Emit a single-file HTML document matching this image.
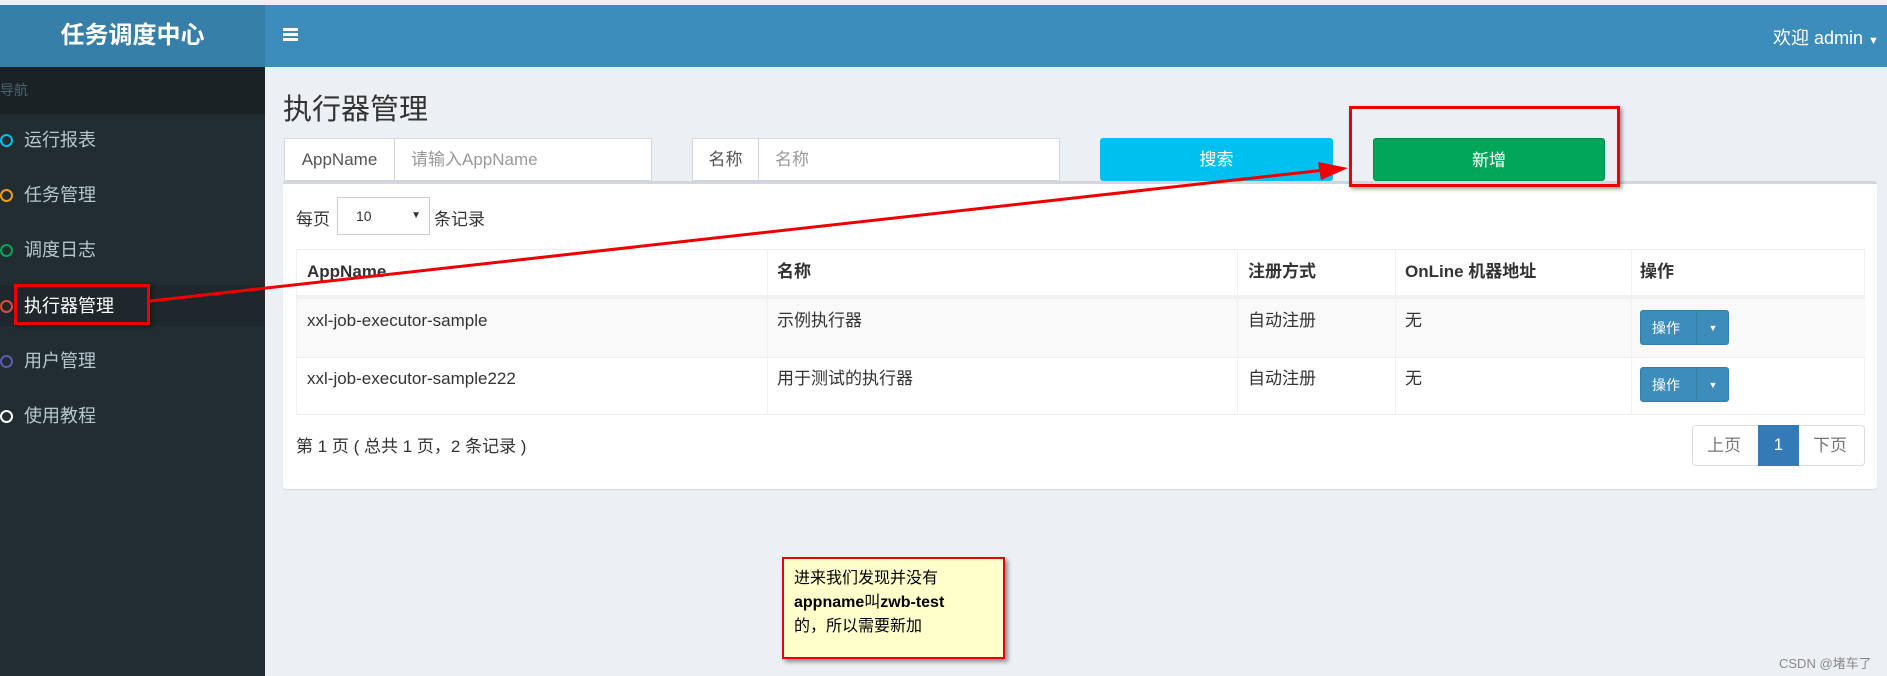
<!DOCTYPE html>
<html><head><meta charset="utf-8"><style>
*{box-sizing:border-box;margin:0;padding:0}
body{width:1887px;height:676px;overflow:hidden;background:#ecf0f5;font-family:"Liberation Sans","Noto Sans CJK SC",sans-serif;color:#333;position:relative;font-size:17px}
.a{position:absolute}
.hdr{left:0;top:5px;width:1887px;height:62px;background:#3c8dbc}
.logo{left:0;top:5px;width:265px;height:62px;background:#367fa9;color:#fff;font-weight:bold;font-size:24px;text-align:center;line-height:62px}
.side{left:0;top:67px;width:265px;height:609px;background:#222d32}
.nav{left:0;top:67px;width:265px;height:47px;background:#1a2226;color:#4b646f;font-size:14px;line-height:47px}
.mi{left:0;width:265px;height:42px;line-height:42px;color:#b8c7ce;font-size:18px;padding-left:24px}
.mi i{position:absolute;left:0;top:15px;width:13px;height:13px;border:2px solid;border-radius:50%}
.ig{border:1px solid #d2d6de;background:#fff;height:43px;font-size:17px;line-height:41px}
.ad{position:absolute;left:0;top:0;bottom:0;border-right:1px solid #d2d6de;text-align:center;color:#555}
.btn{color:#fff;text-align:center;line-height:43px;height:43px;border-radius:3px;font-size:17px}
.td{position:absolute;font-size:17px;line-height:22px;height:22px}
.op{width:89px;height:35px;background:#3c8dbc;border-radius:3px;color:#fff;font-size:14px;line-height:35px;border:1px solid #367fa9}
</style></head><body>
<div class="a hdr"></div>
<div class="a logo">任务调度中心</div>
<div class="a" style="left:283px;top:28px;width:15px;height:3px;background:#fff;box-shadow:0 5px 0 #fff,0 10px 0 #fff"></div>
<div class="a" style="left:1773px;top:24px;color:#fff;font-size:18px">欢迎 admin <span style="font-size:11px">▼</span></div>
<div class="a side"></div>
<div class="a nav">导航</div>
<div class="a mi" style="top:119px"><i style="border-color:#00c0ef"></i>运行报表</div>
<div class="a mi" style="top:174px"><i style="border-color:#f39c12"></i>任务管理</div>
<div class="a mi" style="top:229px"><i style="border-color:#00a65a"></i>调度日志</div>
<div class="a mi" style="top:285px;background:#1e282c;color:#fff;height:41px"><i style="border-color:#dd4b39"></i>执行器管理</div>
<div class="a mi" style="top:340px"><i style="border-color:#605ca8"></i>用户管理</div>
<div class="a mi" style="top:395px"><i style="border-color:#fff"></i>使用教程</div>

<div class="a" style="left:283px;top:86px;font-size:29px">执行器管理</div>
<div class="a ig" style="left:284px;top:138px;width:368px;padding-left:126px;color:#999">请输入AppName<div class="ad" style="width:110px">AppName</div></div>
<div class="a ig" style="left:692px;top:138px;width:368px;padding-left:82px;color:#999">名称<div class="ad" style="width:66px">名称</div></div>
<div class="a btn" style="left:1100px;top:138px;width:233px;background:#00c0ef">搜索</div>
<div class="a btn" style="left:1373px;top:138px;width:232px;background:#00a65a;border:1px solid #008d4c">新增</div>

<div class="a" style="left:283px;top:181px;width:1594px;height:308px;background:#fff;border-top:3px solid #d2d6de;border-radius:3px;box-shadow:0 1px 1px rgba(0,0,0,.1)"></div>
<div class="a" style="left:296px;top:205px">每页</div>
<div class="a" style="left:337px;top:197px;width:93px;height:38px;border:1px solid #ccc;font-size:14px;line-height:36px;padding-left:18px">10<span style="position:absolute;right:8px;font-size:10px">▼</span></div>
<div class="a" style="left:434px;top:205px">条记录</div>

<div class="a" style="left:296px;top:249px;width:1569px;height:166px;border:1px solid #f0f0f0"></div>
<div class="a" style="left:297px;top:295px;width:1568px;height:4px;background:#f0f0f0"></div>
<div class="a" style="left:297px;top:299px;width:1568px;height:58px;background:#f9f9f9"></div>
<div class="a" style="left:297px;top:357px;width:1568px;height:1px;background:#f0f0f0"></div>
<div class="a" style="left:767px;top:249px;width:1px;height:166px;background:#f0f0f0"></div>
<div class="a" style="left:1237px;top:249px;width:1px;height:166px;background:#f0f0f0"></div>
<div class="a" style="left:1395px;top:249px;width:1px;height:166px;background:#f0f0f0"></div>
<div class="a" style="left:1631px;top:249px;width:1px;height:166px;background:#f0f0f0"></div>
<div class="td" style="left:307px;top:261px;font-weight:bold">AppName</div>
<div class="td" style="left:777px;top:261px;font-weight:bold">名称</div>
<div class="td" style="left:1248px;top:261px;font-weight:bold">注册方式</div>
<div class="td" style="left:1405px;top:261px;font-weight:bold">OnLine 机器地址</div>
<div class="td" style="left:1640px;top:261px;font-weight:bold">操作</div>
<div class="td" style="left:307px;top:310px">xxl-job-executor-sample</div>
<div class="td" style="left:777px;top:310px">示例执行器</div>
<div class="td" style="left:1248px;top:310px">自动注册</div>
<div class="td" style="left:1405px;top:310px">无</div>
<div class="td" style="left:307px;top:368px">xxl-job-executor-sample222</div>
<div class="td" style="left:777px;top:368px">用于测试的执行器</div>
<div class="td" style="left:1248px;top:368px">自动注册</div>
<div class="td" style="left:1405px;top:368px">无</div>
<div class="a op" style="left:1640px;top:310px"><span style="position:absolute;left:11px">操作</span><span style="position:absolute;left:55px;top:0;bottom:0;border-left:1px solid #367fa9;width:33px;text-align:center;font-size:9px">▼</span></div>
<div class="a op" style="left:1640px;top:367px"><span style="position:absolute;left:11px">操作</span><span style="position:absolute;left:55px;top:0;bottom:0;border-left:1px solid #367fa9;width:33px;text-align:center;font-size:9px">▼</span></div>
<div class="a" style="left:296px;top:432px">第 1 页 ( 总共 1 页，2 条记录 )</div>
<div class="a" style="left:1692px;top:425px;width:173px;height:41px;border:1px solid #ddd;border-radius:4px;background:#fff;line-height:39px;color:#777;font-size:17px">
<span style="position:absolute;left:14px">上页</span>
<span style="position:absolute;left:65px;top:-1px;width:41px;height:41px;background:#337ab7;color:#fff;text-align:center">1</span>
<span style="position:absolute;left:120px">下页</span></div>

<div class="a" style="left:782px;top:557px;width:223px;height:102px;background:#ffffcc;border:2px solid #e00;box-shadow:3px 3px 4px rgba(0,0,0,.4);padding:8px 10px;font-size:16px;line-height:24px;color:#000">进来我们发现并没有<br><b>appname</b>叫<b>zwb-test</b><br>的，所以需要新加</div>

<div class="a" style="left:1349px;top:106px;width:271px;height:81px;border:3px solid #e00;box-shadow:2px 2px 4px rgba(0,0,0,.4)"></div>
<div class="a" style="left:14px;top:284px;width:136px;height:41px;border:3px solid #e00;box-shadow:2px 2px 4px rgba(0,0,0,.4)"></div>
<svg class="a" style="left:0;top:0" width="1887" height="676"><line x1="150" y1="301" x2="1325" y2="170" stroke="#e00" stroke-width="3"/><polygon points="1348,168 1318,162 1321,180" fill="#e00"/></svg>
<div class="a" style="left:1779px;top:653px;font-size:13px;color:#888">CSDN @堵车了</div>
</body></html>
